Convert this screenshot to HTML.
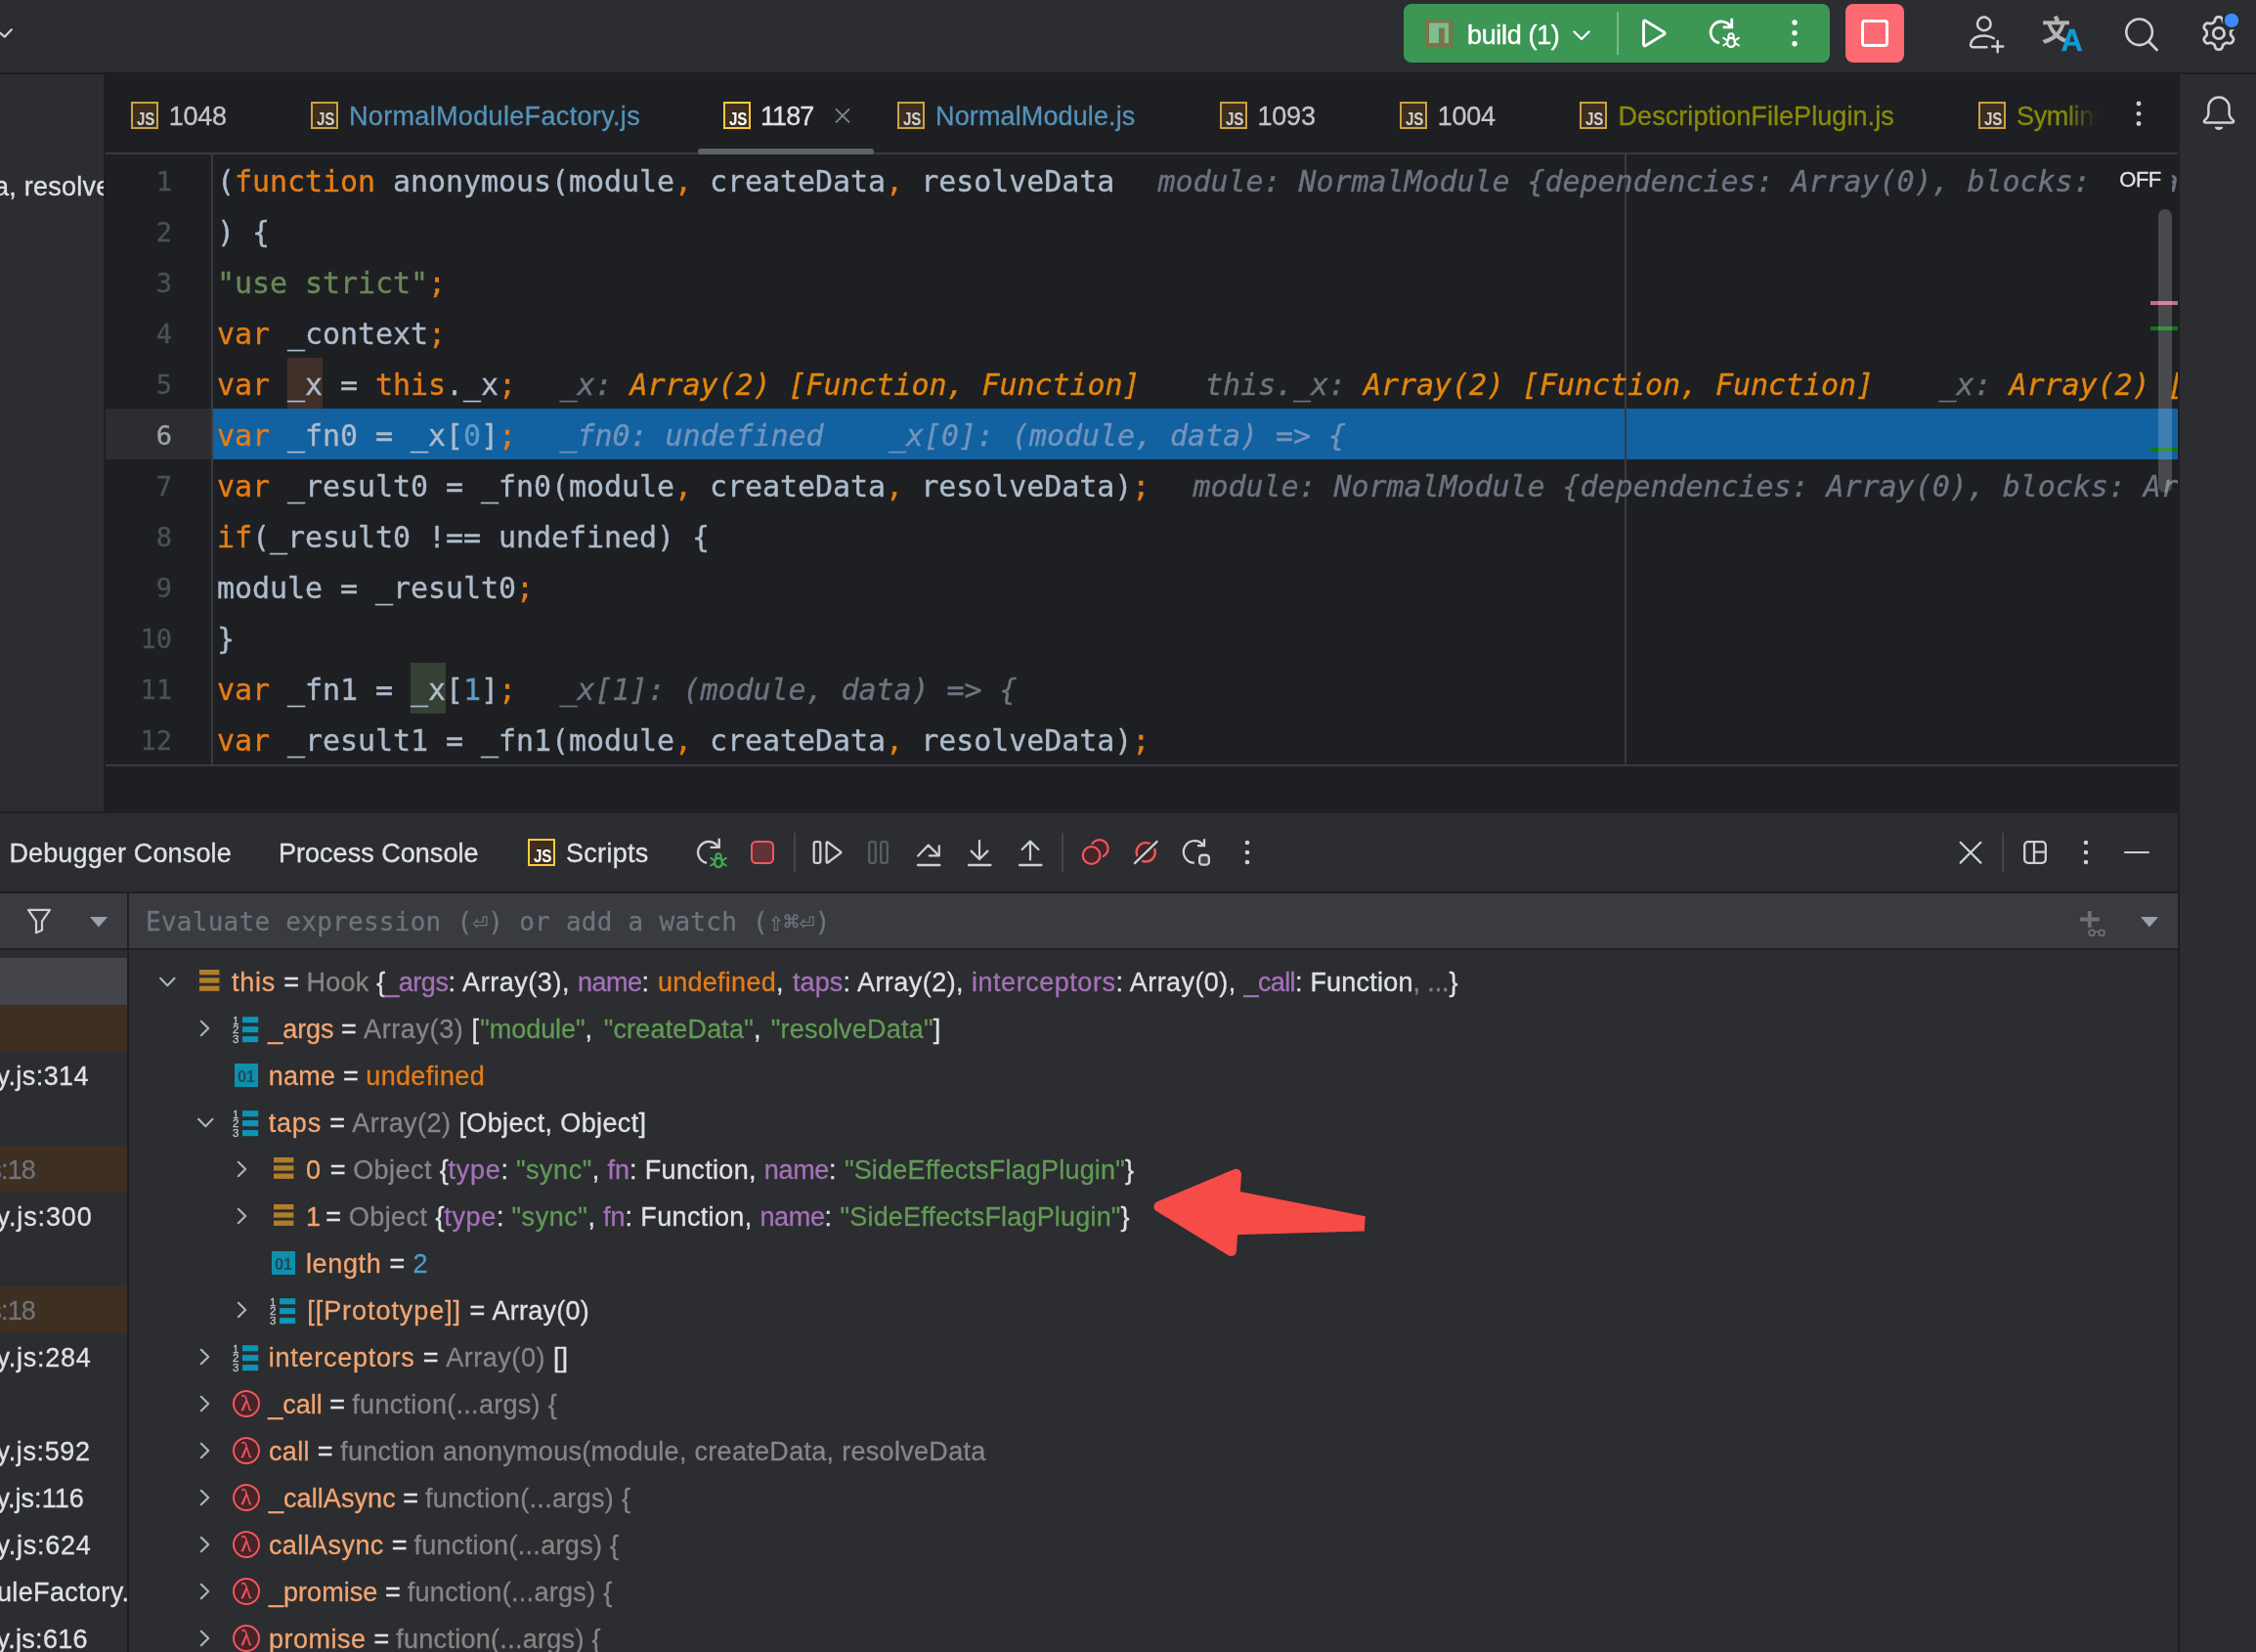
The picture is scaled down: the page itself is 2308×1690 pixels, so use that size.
<!DOCTYPE html>
<html lang="en"><head><meta charset="utf-8"><title>Debugger</title><style>
html,body{margin:0;padding:0;background:#2b2d30;}
body{width:2308px;height:1690px;overflow:hidden;position:relative;font-family:"Liberation Sans", "DejaVu Sans", sans-serif;}
#r{will-change:transform;position:absolute;left:0;top:0;width:2308px;height:1690px;overflow:hidden;}
#r>div,#r>span,#r>svg{position:absolute;}
#r>span{white-space:pre;display:block;-webkit-text-stroke:.3px;}
.js{width:28px;height:28px;box-sizing:border-box;border:2px solid #c9a344;background:#3d2e20;overflow:hidden;}
.js b{position:absolute;right:1.5px;bottom:1px;font:700 18.5px/14px "Liberation Sans", "DejaVu Sans", sans-serif;transform:scaleX(.82);transform-origin:100% 50%;letter-spacing:-.3px;}
.p01{width:24px;height:24px;background:#0e8fae;overflow:hidden;}
.p01 b{position:absolute;left:3px;top:4.5px;font:700 16.5px/16px "Liberation Sans", "DejaVu Sans", sans-serif;color:#1d4a57;letter-spacing:-.4px;}
.lam{width:28px;height:28px;box-sizing:border-box;border:2.2px solid #f2565c;border-radius:50%;background:#442427;}
.lam span{position:absolute;left:0;top:1.3px;width:23.6px;text-align:center;-webkit-text-stroke:.4px;font:23px/21px "Liberation Serif","DejaVu Serif",serif;color:#ee5361;}
.mono{font-family:"DejaVu Sans Mono", "Liberation Mono", monospace;}
.ln{left:108px;width:68px;text-align:right;font:27px/52px "DejaVu Sans Mono", "Liberation Mono", monospace;margin-top:2px;}
.cl{left:222px;width:2006px;height:52px;overflow:hidden;white-space:pre;font:30px/52px "DejaVu Sans Mono", "Liberation Mono", monospace;letter-spacing:-.06px;color:#adbbcb;}
.cl i{font-style:normal;display:inline-block;position:relative;top:2px;-webkit-text-stroke:.35px;}
.cl .k{color:#e57d15;} .cl .s{color:#6a8759;} .cl .n{color:#5d9dca;}
.cl .hg{color:#6c7480;font-style:oblique;} .cl .ho{color:#e2860c;font-style:oblique;} .cl .hb{color:#7294bd;font-style:oblique;}
</style></head>
<body><div id="r">
<div style="left:0px;top:0px;width:2308px;height:74px;background:#2b2d30;"></div>
<div style="left:0px;top:74px;width:2308px;height:2px;background:#1e1f22;"></div>
<div style="left:0px;top:76px;width:106px;height:754px;background:#2b2d30;"></div>
<div style="left:106px;top:76px;width:2124px;height:754px;background:#1e1f22;"></div>
<div style="left:2230px;top:76px;width:78px;height:1614px;background:#2b2d30;"></div>
<div style="left:0px;top:830px;width:2230px;height:2px;background:#1e1f22;"></div>
<div style="left:0px;top:832px;width:2228px;height:858px;background:#2b2d30;"></div>
<div style="left:2228px;top:830px;width:2px;height:860px;background:#1e1f22;"></div>
<div style="left:0px;top:912px;width:2228px;height:2px;background:#1e1f22;"></div>
<div style="left:0px;top:914px;width:2228px;height:56px;background:#393b40;"></div>
<div style="left:0px;top:970px;width:2228px;height:2px;background:#1e1f22;"></div>
<div style="left:130px;top:914px;width:2px;height:776px;background:#1e1f22;"></div>
<div style="left:108px;top:156px;width:2120px;height:2px;background:#393b40;"></div>
<div style="left:108px;top:782px;width:2120px;height:2px;background:#393b40;"></div>
<div style="left:216px;top:158px;width:2px;height:624px;background:#393b40;"></div>
<div style="left:714px;top:152px;width:180px;height:6px;background:#5f6269;border-radius:3px;"></div>
<div style="left:108px;top:418px;width:108px;height:52px;background:#2b2d30;"></div>
<div style="left:218px;top:418px;width:2010px;height:52px;background:#1261a0;"></div>
<div style="left:1662px;top:158px;width:2px;height:624px;background:#393b40;"></div>
<div style="left:294px;top:366px;width:36px;height:52px;background:#40302a;"></div>
<div style="left:420px;top:678px;width:36px;height:52px;background:#344134;"></div>
<div style="left:0px;top:980px;width:130px;height:48px;background:#43454a;"></div>
<div style="left:0px;top:1028px;width:130px;height:48px;background:#3d2f22;"></div>
<div style="left:0px;top:1172px;width:130px;height:48px;background:#3d2f22;"></div>
<div style="left:0px;top:1316px;width:130px;height:48px;background:#3d2f22;"></div>
<svg style="left:0px;top:24px;" width="16" height="20" viewBox="0 0 16 20" fill="none"><path d="M-4 6.2 L4.7 13.7 L11.8 6.3" stroke="#ced0d6" stroke-width="2.2" stroke-linecap="round" stroke-linejoin="round"/></svg>
<div style="left:1436px;top:4px;width:436px;height:60px;background:#3c9654;border-radius:8px;"></div>
<div style="left:1458px;top:20px;width:28px;height:28px;background:#7a7449;"></div>
<svg style="left:1458px;top:20px;" width="28" height="28" viewBox="0 0 28 28" fill="none"><path d="M4 3.6 H24 V24 H19.8 V8.6 H14 V24 H4 Z" fill="#7dbd8f"/></svg>
<span style="left:1501px;top:4px;line-height:60px;font-size:27px;color:#ffffff;letter-spacing:-0.339px;top:6px;-webkit-text-stroke:.45px #fff;">build (1)</span>
<svg style="left:1606px;top:26px;" width="24" height="20" viewBox="0 0 24 20" fill="none"><path d="M4.5 6.5 L12 14 L19.5 6.5" stroke="#fff" stroke-width="2.3" stroke-linecap="round" stroke-linejoin="round"/></svg>
<div style="left:1654px;top:12px;width:2px;height:44px;background:rgba(255,255,255,.32);"></div>
<svg style="left:1675.3px;top:14px;" width="36" height="40" viewBox="0 0 36 40" fill="none"><path d="M6.5 8.2 V31.8 a1.2 1.2 0 0 0 1.8 1 L27.6 21 a1.2 1.2 0 0 0 0-2 L8.3 7.2 a1.2 1.2 0 0 0 -1.8 1 Z" stroke="#fff" stroke-width="2.9" stroke-linejoin="round"/></svg>
<svg style="left:1748px;top:16.5px;" width="36" height="36" viewBox="0 0 36 36" fill="none"><path d="M11 26.8 A11 11 0 1 1 23 11.2" stroke="#ffffff" stroke-width="2.8"/><path d="M23.7 1.7 V10.9 H14.6" stroke="#ffffff" stroke-width="2.8"/><path d="M20.4 23 V19.8 a2.6 2.6 0 0 1 5.2 0 V23" stroke="#ffffff" stroke-width="2.1"/><ellipse cx="23" cy="26.4" rx="3.9" ry="4.6" stroke="#ffffff" stroke-width="2.4" fill="none"/><path d="M18.8 24.2 L15.2 21.9 M27.2 24.2 L30.8 21.9 M18.8 27.2 L15.2 29.5 M27.2 27.2 L30.8 29.5" stroke="#ffffff" stroke-width="2" stroke-linecap="round"/></svg>
<svg style="left:1830px;top:19.3px;" width="12" height="29.7" viewBox="0 0 12 29.7" fill="none"><circle cx="6" cy="4" r="2.7" fill="#ffffff"/><circle cx="6" cy="14.8" r="2.7" fill="#ffffff"/><circle cx="6" cy="25.7" r="2.7" fill="#ffffff"/></svg>
<div style="left:1888px;top:4px;width:60px;height:60px;background:#fe6a71;border-radius:8px;"></div>
<div style="left:1904px;top:20px;width:28px;height:28px;background:transparent;border:3px solid #fff;border-radius:4px;box-sizing:border-box;"></div>
<svg style="left:2010px;top:12px;" width="46" height="46" viewBox="0 0 46 46" fill="none"><circle cx="19.8" cy="12.4" r="6.8" stroke="#ced0d6" stroke-width="2.5"/><path d="M22.5 36.3 H8.6 a2.6 2.6 0 0 1 -2.5 -3.3 C7.6 27 13 24.6 19.8 24.6 c4 0 7.6 .9 10 2.6" stroke="#ced0d6" stroke-width="2.5" stroke-linecap="round"/><path d="M33.7 30 V41.2 M28.1 35.6 H39.3" stroke="#ced0d6" stroke-width="2.5" stroke-linecap="round"/></svg>
<span style="left:2089px;top:15px;font-size:29px;line-height:34px;color:#b4b4b4;font-family:'Liberation Sans','Noto Sans CJK SC',sans-serif;font-weight:700">文</span>
<span style="left:2108.5px;top:25px;font-size:31px;line-height:34px;color:#0e9ad6;font-weight:700">A</span>
<svg style="left:2170px;top:14px;" width="44" height="44" viewBox="0 0 44 44" fill="none"><circle cx="18.6" cy="18.8" r="13.3" stroke="#ced0d6" stroke-width="2.6"/><path d="M28.2 28.6 L36.6 37" stroke="#ced0d6" stroke-width="2.8" stroke-linecap="round"/></svg>
<svg style="left:2248px;top:12px;" width="46" height="46" viewBox="0 0 46 46" fill="none"><path d="M34.1 22 L34.1 22.6 L34.1 23.3 L34.3 24 L34.8 24.7 L35.8 25.7 L36.7 26.8 L37 27.8 L37 28.7 L36.7 29.5 L36.3 30.3 L35.8 31 L35.2 31.7 L34.5 32.2 L33.5 32.4 L32.1 32.2 L30.8 31.8 L29.8 31.8 L29.1 32 L28.6 32.3 L28 32.6 L27.4 32.9 L26.9 33.3 L26.4 33.7 L26 34.6 L25.6 35.9 L25.1 37.2 L24.4 38 L23.6 38.4 L22.8 38.6 L21.9 38.6 L21 38.6 L20.2 38.4 L19.4 38 L18.7 37.2 L18.2 35.9 L17.8 34.6 L17.4 33.7 L16.9 33.3 L16.4 32.9 L15.8 32.6 L15.2 32.3 L14.7 32 L14 31.8 L13 31.8 L11.7 32.2 L10.3 32.4 L9.3 32.2 L8.6 31.7 L8 31 L7.5 30.3 L7.1 29.5 L6.8 28.7 L6.8 27.8 L7.1 26.8 L8 25.7 L9 24.7 L9.5 24 L9.7 23.3 L9.7 22.6 L9.7 22 L9.7 21.4 L9.7 20.7 L9.5 20 L9 19.3 L8 18.3 L7.1 17.2 L6.8 16.2 L6.8 15.3 L7.1 14.5 L7.5 13.7 L8 13 L8.6 12.3 L9.3 11.8 L10.3 11.6 L11.7 11.8 L13 12.2 L14 12.2 L14.7 12 L15.2 11.7 L15.8 11.4 L16.4 11.1 L16.9 10.7 L17.4 10.3 L17.8 9.4 L18.2 8.1 L18.7 6.8 L19.4 6 L20.2 5.6 L21 5.4 L21.9 5.4 L22.8 5.4 L23.6 5.6 L24.4 6 L25.1 6.8 L25.6 8.1 L26 9.4 L26.4 10.3 L26.9 10.7 L27.4 11.1 L28 11.4 L28.6 11.7 L29.1 12 L29.8 12.2 L30.8 12.2 L32.1 11.8 L33.5 11.6 L34.5 11.8 L35.2 12.3 L35.8 13 L36.3 13.7 L36.7 14.5 L37 15.3 L37 16.2 L36.7 17.2 L35.8 18.3 L34.8 19.3 L34.3 20 L34.1 20.7 L34.1 21.4 Z" stroke="#ced0d6" stroke-width="2.8" stroke-linejoin="round"/><circle cx="21.9" cy="22" r="5.7" stroke="#ced0d6" stroke-width="2.8"/><circle cx="35" cy="8.9" r="9.4" fill="#2b2d30"/><circle cx="35" cy="8.9" r="7.2" fill="#3d8bff"/></svg>
<div style="left:0;top:158px;width:106px;height:52px;overflow:hidden"><span style="position:absolute;left:-6px;top:7px;line-height:52px;font-size:27px;color:#dfe1e5;letter-spacing:.25px;-webkit-text-stroke:.3px;white-space:pre">a, resolveData</span></div>
<div class="js" style="left:134px;top:104px;border-color:#c9a344;color:#cfcfcf"><b>JS</b></div>
<span style="left:172.7px;top:95px;line-height:48px;font-size:27px;color:#c3c5ca;letter-spacing:-0.22px;">1048</span>
<div class="js" style="left:318px;top:104px;border-color:#c9a344;color:#cfcfcf"><b>JS</b></div>
<span style="left:357px;top:95px;line-height:48px;font-size:27px;color:#5592ba;letter-spacing:0.337px;">NormalModuleFactory.js</span>
<div class="js" style="left:740px;top:104px;border-color:#ffcb3d;color:#ffffff"><b>JS</b></div>
<span style="left:778px;top:95px;line-height:48px;font-size:27px;color:#dfe1e5;letter-spacing:-0.891px;">1187</span>
<div class="js" style="left:918px;top:104px;border-color:#c9a344;color:#cfcfcf"><b>JS</b></div>
<span style="left:957px;top:95px;line-height:48px;font-size:27px;color:#5592ba;letter-spacing:0.128px;">NormalModule.js</span>
<div class="js" style="left:1248px;top:104px;border-color:#c9a344;color:#cfcfcf"><b>JS</b></div>
<span style="left:1286.4px;top:95px;line-height:48px;font-size:27px;color:#c3c5ca;letter-spacing:-0.17px;">1093</span>
<div class="js" style="left:1432px;top:104px;border-color:#c9a344;color:#cfcfcf"><b>JS</b></div>
<span style="left:1470.8px;top:95px;line-height:48px;font-size:27px;color:#c3c5ca;letter-spacing:-0.27px;">1004</span>
<div class="js" style="left:1616px;top:104px;border-color:#c9a344;color:#cfcfcf"><b>JS</b></div>
<span style="left:1655.5px;top:95px;line-height:48px;font-size:27px;color:#8a8b09;letter-spacing:0.07px;">DescriptionFilePlugin.js</span>
<div class="js" style="left:2024px;top:104px;border-color:#c9a344;color:#cfcfcf"><b>JS</b></div>
<span style="left:2063px;top:95px;line-height:48px;font-size:27px;color:#8a8b09;letter-spacing:-0.359px;">Symlink</span>
<div style="left:2112px;top:96px;width:40px;height:48px;background:linear-gradient(90deg, rgba(30,31,34,0), #1e1f22 85%);"></div>
<div style="left:2150px;top:96px;width:30px;height:48px;background:#1e1f22;"></div>
<svg style="left:852px;top:108px;" width="20" height="20" viewBox="0 0 20 20" fill="none"><path d="M3 3.4 L17 17.4 M17 3.4 L3 17.4" stroke="#7f838b" stroke-width="2"/></svg>
<svg style="left:2182px;top:101.6px;" width="12" height="28.5" viewBox="0 0 12 28.5" fill="none"><circle cx="6" cy="4" r="2.4" fill="#ced0d6"/><circle cx="6" cy="14.300000000000011" r="2.4" fill="#ced0d6"/><circle cx="6" cy="24.5" r="2.4" fill="#ced0d6"/></svg>
<svg style="left:2250px;top:96px;" width="40" height="40" viewBox="0 0 40 40" fill="none"><path d="M20 3.6 c-6 0-10.6 4.4-10.6 10.6 v6.4 c0 1.6-.6 3-1.8 4.2 l-2.4 2.6 c-.8 .9-.2 2.2 1 2.2 h27.6 c1.2 0 1.8-1.3 1-2.2 l-2.4-2.6 c-1.2-1.2-1.8-2.6-1.8-4.2 v-6.4 C30.6 8 26 3.6 20 3.6 Z" stroke="#ced0d6" stroke-width="2.5" stroke-linejoin="round"/><path d="M15.6 33.8 a4.6 4.6 0 0 0 8.8 0 Z" fill="#ced0d6"/></svg>
<span class="ln" style="top:158px;color:#4b5059">1</span>
<div class="cl" style="top:158px"><i class="d">(</i><i class="k">function</i><i class="d"> anonymous(module</i><i class="k">,</i><i class="d"> createData</i><i class="k">,</i><i class="d"> resolveData</i><i style="margin-left:44.4px"></i><i class="hg">module: NormalModule {dependencies: Array(0), blocks: Array(0), type: "javascript/auto"</i></div>
<span class="ln" style="top:210px;color:#4b5059">2</span>
<div class="cl" style="top:210px"><i class="d">) {</i></div>
<span class="ln" style="top:262px;color:#4b5059">3</span>
<div class="cl" style="top:262px"><i class="s">"use strict"</i><i class="k">;</i></div>
<span class="ln" style="top:314px;color:#4b5059">4</span>
<div class="cl" style="top:314px"><i class="k">var</i><i class="d"> _context</i><i class="k">;</i></div>
<span class="ln" style="top:366px;color:#4b5059">5</span>
<div class="cl" style="top:366px"><i class="k">var</i><i class="d"> _x = </i><i class="k">this</i><i class="d">._x</i><i class="k">;</i><i style="margin-left:44.4px"></i><i class="hg">_x: </i><i class="ho">Array(2) [Function, Function]</i><i style="margin-left:66.5px"></i><i class="hg">this._x: </i><i class="ho">Array(2) [Function, Function]</i><i style="margin-left:66.5px"></i><i class="hg">_x: </i><i class="ho">Array(2) [Function, Function]</i></div>
<span class="ln" style="top:418px;color:#a1a3ab">6</span>
<div class="cl" style="top:418px"><i class="k">var</i><i class="d"> _fn0 = _x[</i><i class="n">0</i><i class="d">]</i><i class="k">;</i><i style="margin-left:44.4px"></i><i class="hb">_fn0: undefined</i><i style="margin-left:66.5px"></i><i class="hb">_x[0]: (module, data) =&gt; {</i></div>
<span class="ln" style="top:470px;color:#4b5059">7</span>
<div class="cl" style="top:470px"><i class="k">var</i><i class="d"> _result0 = _fn0(module</i><i class="k">,</i><i class="d"> createData</i><i class="k">,</i><i class="d"> resolveData)</i><i class="k">;</i><i style="margin-left:44.4px"></i><i class="hg">module: NormalModule {dependencies: Array(0), blocks: Array(0), type: "javascript/auto"</i></div>
<span class="ln" style="top:522px;color:#4b5059">8</span>
<div class="cl" style="top:522px"><i class="k">if</i><i class="d">(_result0 !== undefined) {</i></div>
<span class="ln" style="top:574px;color:#4b5059">9</span>
<div class="cl" style="top:574px"><i class="d">module = _result0</i><i class="k">;</i></div>
<span class="ln" style="top:626px;color:#4b5059">10</span>
<div class="cl" style="top:626px"><i class="d">}</i></div>
<span class="ln" style="top:678px;color:#4b5059">11</span>
<div class="cl" style="top:678px"><i class="k">var</i><i class="d"> _fn1 = _x[</i><i class="n">1</i><i class="d">]</i><i class="k">;</i><i style="margin-left:44.4px"></i><i class="hg">_x[1]: (module, data) =&gt; {</i></div>
<span class="ln" style="top:730px;color:#4b5059">12</span>
<div class="cl" style="top:730px"><i class="k">var</i><i class="d"> _result1 = _fn1(module</i><i class="k">,</i><i class="d"> createData</i><i class="k">,</i><i class="d"> resolveData)</i><i class="k">;</i></div>
<div style="left:2150px;top:160px;width:72px;height:48px;background:#1e1f22;"></div>
<span style="left:2168.3px;top:160px;line-height:48px;font-size:22px;color:#dfe1e5;letter-spacing:-0.5px;">OFF</span>
<div style="left:2200px;top:308px;width:28px;height:4px;background:#c86a8a;"></div>
<div style="left:2200px;top:334px;width:28px;height:4px;background:#0a7a14;"></div>
<div style="left:2200px;top:458px;width:28px;height:4px;background:#0a7a14;"></div>
<div style="left:2208px;top:214px;width:14px;height:290px;background:rgba(255,255,255,.19);border-radius:7px;"></div>
<span style="left:9.4px;top:832px;line-height:80px;font-size:27px;color:#dfe1e5;letter-spacing:0.146px;top:833px;">Debugger Console</span>
<span style="left:285px;top:832px;line-height:80px;font-size:27px;color:#dfe1e5;letter-spacing:0.026px;top:833px;">Process Console</span>
<div class="js" style="left:540px;top:858px;border-color:#ffcb3d;color:#ffffff"><b>JS</b></div>
<span style="left:579px;top:832px;line-height:80px;font-size:27px;color:#dfe1e5;letter-spacing:0.296px;top:833px;">Scripts</span>
<svg style="left:712px;top:856px;" width="36" height="36" viewBox="0 0 36 36" fill="none"><path d="M11 26.8 A11 11 0 1 1 23 11.2" stroke="#ced0d6" stroke-width="2.4"/><path d="M23.7 1.7 V10.9 H14.6" stroke="#ced0d6" stroke-width="2.4"/><path d="M20.4 23 V19.8 a2.6 2.6 0 0 1 5.2 0 V23" stroke="#45a85a" stroke-width="2.1"/><ellipse cx="23" cy="26.4" rx="3.9" ry="4.6" stroke="#45a85a" stroke-width="2.4" fill="#1c3d25"/><path d="M18.8 24.2 L15.2 21.9 M27.2 24.2 L30.8 21.9 M18.8 27.2 L15.2 29.5 M27.2 27.2 L30.8 29.5" stroke="#45a85a" stroke-width="2" stroke-linecap="round"/></svg>
<div style="left:768px;top:860px;width:24px;height:24px;background:#5f3337;border:2.3px solid #f2595f;border-radius:5.5px;box-sizing:border-box;"></div>
<div style="left:812px;top:852px;width:2px;height:40px;background:#43454a;"></div>
<svg style="left:828px;top:856px;" width="36" height="32" viewBox="0 0 36 32" fill="none"><rect x="4.7" y="5.2" width="6.6" height="21.6" rx="2" stroke="#ced0d6" stroke-width="2.3"/><path d="M17.6 6.2 V25.8 a.8 .8 0 0 0 1.2 .7 L32 16.7 a.8 .8 0 0 0 0-1.4 L18.8 5.5 a.8 .8 0 0 0 -1.2 .7 Z" stroke="#ced0d6" stroke-width="2.3" stroke-linejoin="round"/></svg>
<svg style="left:884px;top:856px;" width="28" height="32" viewBox="0 0 28 32" fill="none"><rect x="5.2" y="5.2" width="6.6" height="21.6" rx="2" stroke="#5a5d63" stroke-width="2.3"/><rect x="17.2" y="5.2" width="6.6" height="21.6" rx="2" stroke="#5a5d63" stroke-width="2.3"/></svg>
<svg style="left:934px;top:856px;" width="32" height="32" viewBox="0 0 32 32" fill="none"><path d="M5.2 19.6 L15.8 8.6 L26.6 19.2 M16.8 19.4 H26.8 V9.4" stroke="#ced0d6" stroke-width="2.2" stroke-linecap="round" stroke-linejoin="round"/><path d="M5 29 H27.4" stroke="#ced0d6" stroke-width="2.3" stroke-linecap="round"/></svg>
<svg style="left:986px;top:856px;" width="32" height="32" viewBox="0 0 32 32" fill="none"><path d="M16 4 V22.6 M7.6 14.6 L16 23 L24.4 14.6" stroke="#ced0d6" stroke-width="2.2" stroke-linecap="round" stroke-linejoin="round"/><path d="M5 29 H27.4" stroke="#ced0d6" stroke-width="2.3" stroke-linecap="round"/></svg>
<svg style="left:1038px;top:856px;" width="32" height="32" viewBox="0 0 32 32" fill="none"><path d="M16 23.4 V5 M7.6 13 L16 4.6 L24.4 13" stroke="#ced0d6" stroke-width="2.2" stroke-linecap="round" stroke-linejoin="round"/><path d="M5 29 H27.4" stroke="#ced0d6" stroke-width="2.3" stroke-linecap="round"/></svg>
<div style="left:1086px;top:852px;width:2px;height:40px;background:#43454a;"></div>
<svg style="left:1102px;top:854px;" width="36" height="36" viewBox="0 0 36 36" fill="none"><circle cx="22.8" cy="14" r="8.8" fill="#462427" stroke="#f2565c" stroke-width="2.3"/><circle cx="14.6" cy="21" r="11.2" fill="#2b2d30"/><circle cx="14.6" cy="21" r="8.8" fill="#462427" stroke="#f2565c" stroke-width="2.3"/></svg>
<svg style="left:1154px;top:854px;" width="36" height="36" viewBox="0 0 36 36" fill="none"><circle cx="18.2" cy="17.8" r="9.6" fill="#462427" stroke="#f2565c" stroke-width="2.3"/><path d="M6.9 29.1 L29.7 6.9" stroke="#2b2d30" stroke-width="6.5"/><path d="M6.9 29.1 L29.7 6.9" stroke="#ced0d6" stroke-width="2.2" stroke-linecap="round"/></svg>
<svg style="left:1206px;top:854px;" width="36" height="36" viewBox="0 0 36 36" fill="none"><path d="M15.76 28.74 A11.3 11.3 0 1 1 25.69 11.4" stroke="#ced0d6" stroke-width="2.3"/><path d="M26 4.3 V11.2 H19" stroke="#ced0d6" stroke-width="2.3"/><rect x="21.15" y="20.75" width="9.7" height="9.9" rx="3" fill="#43454a" stroke="#ced0d6" stroke-width="2.3"/></svg>
<svg style="left:1270px;top:858.2px;" width="12" height="28" viewBox="0 0 12 28" fill="none"><circle cx="6" cy="4" r="2.3" fill="#ced0d6"/><circle cx="6" cy="14" r="2.3" fill="#ced0d6"/><circle cx="6" cy="24" r="2.3" fill="#ced0d6"/></svg>
<svg style="left:2000px;top:856px;" width="32" height="32" viewBox="0 0 32 32" fill="none"><path d="M5.6 5.8 L26.4 26.6 M26.4 5.8 L5.6 26.6" stroke="#ced0d6" stroke-width="2.2" stroke-linecap="round"/></svg>
<div style="left:2048px;top:852px;width:2px;height:40px;background:#43454a;"></div>
<svg style="left:2066px;top:856px;" width="32" height="32" viewBox="0 0 32 32" fill="none"><rect x="5.2" y="5.2" width="21.6" height="21.6" rx="3.6" stroke="#ced0d6" stroke-width="2.3"/><path d="M15 5.2 V26.8 M15 15.6 H26.8" stroke="#ced0d6" stroke-width="2.3"/></svg>
<svg style="left:2128px;top:858.1px;" width="12" height="28" viewBox="0 0 12 28" fill="none"><circle cx="6" cy="4" r="2.3" fill="#ced0d6"/><circle cx="6" cy="14" r="2.3" fill="#ced0d6"/><circle cx="6" cy="24" r="2.3" fill="#ced0d6"/></svg>
<div style="left:2173px;top:870.9px;width:26px;height:2.3px;background:#ced0d6;border-radius:1px;"></div>
<svg style="left:24px;top:926px;" width="32" height="32" viewBox="0 0 32 32" fill="none"><path d="M5 4.8 H27 L19 16.4 V25.4 L13 28.2 V16.4 Z" stroke="#ced0d6" stroke-width="2.2" stroke-linejoin="round"/></svg>
<svg style="left:90px;top:936px;" width="22" height="14" viewBox="0 0 22 14" fill="none"><path d="M2 2 H20 L11 12.4 Z" fill="#9da0a8"/></svg>
<span style="left:149px;top:915px;line-height:56px;font-size:26px;color:#6f737a;letter-spacing:.27px;white-space:pre" class="mono">Evaluate expression (⏎) or add a watch (⇧⌘⏎)</span>
<svg style="left:2124px;top:928px;" width="34" height="34" viewBox="0 0 34 34" fill="none"><path d="M13.8 4 V20.8 M4 12.4 H23.9" stroke="#6e7075" stroke-width="4"/><circle cx="16" cy="26.2" r="2.9" stroke="#6e7075" stroke-width="1.7"/><circle cx="26" cy="26.2" r="2.9" stroke="#6e7075" stroke-width="1.7"/><path d="M18.8 25.6 q2.2 -1.4 4.4 0" stroke="#6e7075" stroke-width="1.5"/></svg>
<svg style="left:2188px;top:936px;" width="22" height="14" viewBox="0 0 22 14" fill="none"><path d="M2 2 H20 L11 12.4 Z" fill="#9da0a8"/></svg>
<span style="left:-3.5px;top:1076px;line-height:48px;font-size:27px;color:#dfe1e5;letter-spacing:0.432px;top:1077px;">y.js:314</span>
<span style="left:-11.5px;top:1172px;line-height:48px;font-size:27px;color:#6f737a;letter-spacing:-0.937px;top:1173px;">s:18</span>
<span style="left:-3.5px;top:1220px;line-height:48px;font-size:27px;color:#dfe1e5;letter-spacing:0.882px;top:1221px;">y.js:300</span>
<span style="left:-11.5px;top:1316px;line-height:48px;font-size:27px;color:#6f737a;letter-spacing:-0.937px;top:1317px;">s:18</span>
<span style="left:-3.5px;top:1364px;line-height:48px;font-size:27px;color:#dfe1e5;letter-spacing:0.744px;top:1365px;">y.js:284</span>
<span style="left:-3.5px;top:1460px;line-height:48px;font-size:27px;color:#dfe1e5;letter-spacing:0.632px;top:1461px;">y.js:592</span>
<span style="left:-3.5px;top:1508px;line-height:48px;font-size:27px;color:#dfe1e5;letter-spacing:0.032px;top:1509px;">y.js:116</span>
<span style="left:-3.5px;top:1556px;line-height:48px;font-size:27px;color:#dfe1e5;letter-spacing:0.744px;top:1557px;">y.js:624</span>
<div style="left:0;top:1604px;width:130px;height:48px;overflow:hidden"><span style="position:absolute;left:-3px;top:1px;line-height:48px;font-size:27px;color:#dfe1e5;letter-spacing:.35px;-webkit-text-stroke:.3px;white-space:pre">uleFactory.js</span></div>
<span style="left:-3.5px;top:1652px;line-height:48px;font-size:27px;color:#dfe1e5;letter-spacing:0.282px;top:1653px;">y.js:616</span>
<svg style="left:160.6px;top:996.5px;" width="22" height="16" viewBox="0 0 22 16" fill="none"><path d="M3.1 3.8 L10.3 11.2 L17.5 3.8" stroke="#b0b3bd" stroke-width="2.1" stroke-linecap="round" stroke-linejoin="round"/></svg>
<svg style="left:204px;top:992px;" width="21" height="22" viewBox="0 0 21 22" fill="none"><rect x="0" y="0" width="20.4" height="5.3" fill="#b07d2b"/><rect x="0" y="8.3" width="20.4" height="5.3" fill="#b07d2b"/><rect x="0" y="16.6" width="20.4" height="5.3" fill="#b07d2b"/></svg>
<span style="left:237px;top:981px;line-height:48px;font-size:27px;color:#f3a571;letter-spacing:0.734px;">this </span>
<span style="left:290.2px;top:981px;line-height:48px;font-size:27px;color:#dfe1e5;letter-spacing:0.059px;">= </span>
<span style="left:313.6px;top:981px;line-height:48px;font-size:27px;color:#868686;letter-spacing:0.231px;">Hook </span>
<span style="left:385.3px;top:981px;line-height:48px;font-size:27px;color:#dfe1e5;letter-spacing:-1.131px;">{</span>
<span style="left:393.2px;top:981px;line-height:48px;font-size:27px;color:#a571ba;letter-spacing:-0.449px;">_args</span>
<span style="left:458.5px;top:981px;line-height:48px;font-size:27px;color:#dfe1e5;letter-spacing:0.539px;">: Array(3), </span>
<span style="left:591px;top:981px;line-height:48px;font-size:27px;color:#a571ba;letter-spacing:-0.512px;">name</span>
<span style="left:656.5px;top:981px;line-height:48px;font-size:27px;color:#dfe1e5;letter-spacing:0.692px;">: </span>
<span style="left:672.9px;top:981px;line-height:48px;font-size:27px;color:#e47c1a;letter-spacing:0.275px;">undefined</span>
<span style="left:794px;top:981px;line-height:48px;font-size:27px;color:#dfe1e5;letter-spacing:0.992px;">, </span>
<span style="left:811px;top:981px;line-height:48px;font-size:27px;color:#a571ba;letter-spacing:0.113px;">taps</span>
<span style="left:862.5px;top:981px;line-height:48px;font-size:27px;color:#dfe1e5;letter-spacing:0.456px;">: Array(2), </span>
<span style="left:994px;top:981px;line-height:48px;font-size:27px;color:#a571ba;letter-spacing:0.535px;">interceptors</span>
<span style="left:1141.5px;top:981px;line-height:48px;font-size:27px;color:#dfe1e5;letter-spacing:0.414px;">: Array(0), </span>
<span style="left:1272.5px;top:981px;line-height:48px;font-size:27px;color:#a571ba;letter-spacing:-0.606px;">_call</span>
<span style="left:1325px;top:981px;line-height:48px;font-size:27px;color:#dfe1e5;letter-spacing:0.204px;">: Function</span>
<span style="left:1445.6px;top:981px;line-height:48px;font-size:27px;color:#868686;letter-spacing:-0.123px;">, ...</span>
<span style="left:1482.5px;top:981px;line-height:48px;font-size:27px;color:#dfe1e5;letter-spacing:0.969px;">}</span>
<svg style="left:202px;top:1041px;" width="16" height="22" viewBox="0 0 16 22" fill="none"><path d="M3.8 3.8 L11.2 11 L3.8 18.2" stroke="#b0b3bd" stroke-width="2.1" stroke-linecap="round" stroke-linejoin="round"/></svg>
<svg style="left:238px;top:1037.5px;" width="27" height="31" viewBox="0 0 27 31" fill="none"><text x="0" y="9.6" font-size="11.5" font-family="Liberation Sans, sans-serif" fill="#bcc3cb" stroke="#bcc3cb" stroke-width=".3">1</text><text x="0" y="19.3" font-size="11.5" font-family="Liberation Sans, sans-serif" fill="#bcc3cb" stroke="#bcc3cb" stroke-width=".3">2</text><text x="0" y="29" font-size="11.5" font-family="Liberation Sans, sans-serif" fill="#bcc3cb" stroke="#bcc3cb" stroke-width=".3">3</text><rect x="10" y="2.2" width="16.2" height="6.1" fill="#0d95b6"/><rect x="10" y="12.1" width="16.2" height="6.1" fill="#0d95b6"/><rect x="10" y="22.1" width="16.2" height="6.1" fill="#0d95b6"/></svg>
<span style="left:274.3px;top:1029px;line-height:48px;font-size:27px;color:#f3a571;letter-spacing:-0.074px;">_args </span>
<span style="left:348.9px;top:1029px;line-height:48px;font-size:27px;color:#dfe1e5;letter-spacing:-0.091px;">= </span>
<span style="left:372px;top:1029px;line-height:48px;font-size:27px;color:#868686;letter-spacing:0.62px;">Array(3) </span>
<span style="left:482.6px;top:1029px;line-height:48px;font-size:27px;color:#dfe1e5;letter-spacing:1.184px;">[</span>
<span style="left:491.3px;top:1029px;line-height:48px;font-size:27px;color:#629a55;letter-spacing:-0.067px;">"module"</span>
<span style="left:598.5px;top:1029px;line-height:48px;font-size:27px;color:#dfe1e5;letter-spacing:2.092px;">, </span>
<span style="left:617.7px;top:1029px;line-height:48px;font-size:27px;color:#629a55;letter-spacing:0.171px;">"createData"</span>
<span style="left:771px;top:1029px;line-height:48px;font-size:27px;color:#dfe1e5;letter-spacing:1.342px;">, </span>
<span style="left:788.7px;top:1029px;line-height:48px;font-size:27px;color:#629a55;letter-spacing:0.219px;">"resolveData"</span>
<span style="left:954.8px;top:1029px;line-height:48px;font-size:27px;color:#dfe1e5;letter-spacing:0.684px;">]</span>
<div class="p01" style="left:240px;top:1088px"><b>01</b></div>
<span style="left:274.8px;top:1077px;line-height:48px;font-size:27px;color:#f3a571;letter-spacing:0.211px;">name </span>
<span style="left:350.9px;top:1077px;line-height:48px;font-size:27px;color:#dfe1e5;letter-spacing:0.059px;">= </span>
<span style="left:374.3px;top:1077px;line-height:48px;font-size:27px;color:#e47c1a;letter-spacing:0.342px;">undefined</span>
<svg style="left:199.6px;top:1140.5px;" width="22" height="16" viewBox="0 0 22 16" fill="none"><path d="M3.1 3.8 L10.3 11.2 L17.5 3.8" stroke="#b0b3bd" stroke-width="2.1" stroke-linecap="round" stroke-linejoin="round"/></svg>
<svg style="left:238px;top:1133.5px;" width="27" height="31" viewBox="0 0 27 31" fill="none"><text x="0" y="9.6" font-size="11.5" font-family="Liberation Sans, sans-serif" fill="#bcc3cb" stroke="#bcc3cb" stroke-width=".3">1</text><text x="0" y="19.3" font-size="11.5" font-family="Liberation Sans, sans-serif" fill="#bcc3cb" stroke="#bcc3cb" stroke-width=".3">2</text><text x="0" y="29" font-size="11.5" font-family="Liberation Sans, sans-serif" fill="#bcc3cb" stroke="#bcc3cb" stroke-width=".3">3</text><rect x="10" y="2.2" width="16.2" height="6.1" fill="#0d95b6"/><rect x="10" y="12.1" width="16.2" height="6.1" fill="#0d95b6"/><rect x="10" y="22.1" width="16.2" height="6.1" fill="#0d95b6"/></svg>
<span style="left:274.8px;top:1125px;line-height:48px;font-size:27px;color:#f3a571;letter-spacing:0.771px;">taps </span>
<span style="left:337.2px;top:1125px;line-height:48px;font-size:27px;color:#dfe1e5;letter-spacing:-0.091px;">= </span>
<span style="left:360.3px;top:1125px;line-height:48px;font-size:27px;color:#868686;letter-spacing:0.454px;">Array(2) </span>
<span style="left:469.4px;top:1125px;line-height:48px;font-size:27px;color:#dfe1e5;letter-spacing:0.376px;">[Object, Object]</span>
<svg style="left:239.7px;top:1185px;" width="16" height="22" viewBox="0 0 16 22" fill="none"><path d="M3.8 3.8 L11.2 11 L3.8 18.2" stroke="#b0b3bd" stroke-width="2.1" stroke-linecap="round" stroke-linejoin="round"/></svg>
<svg style="left:279.8px;top:1184px;" width="21" height="22" viewBox="0 0 21 22" fill="none"><rect x="0" y="0" width="20.4" height="5.3" fill="#b07d2b"/><rect x="0" y="8.3" width="20.4" height="5.3" fill="#b07d2b"/><rect x="0" y="16.6" width="20.4" height="5.3" fill="#b07d2b"/></svg>
<span style="left:312.9px;top:1173px;line-height:48px;font-size:27px;color:#f3a571;letter-spacing:1.134px;">0 </span>
<span style="left:337.7px;top:1173px;line-height:48px;font-size:27px;color:#dfe1e5;letter-spacing:0.109px;">= </span>
<span style="left:361.2px;top:1173px;line-height:48px;font-size:27px;color:#868686;letter-spacing:0.436px;">Object </span>
<span style="left:449.8px;top:1173px;line-height:48px;font-size:27px;color:#dfe1e5;letter-spacing:-0.231px;">{</span>
<span style="left:458.6px;top:1173px;line-height:48px;font-size:27px;color:#a571ba;letter-spacing:0.688px;">type</span>
<span style="left:512.4px;top:1173px;line-height:48px;font-size:27px;color:#dfe1e5;letter-spacing:0.242px;">: </span>
<span style="left:527.9px;top:1173px;line-height:48px;font-size:27px;color:#629a55;letter-spacing:0.535px;">"sync"</span>
<span style="left:605.8px;top:1173px;line-height:48px;font-size:27px;color:#dfe1e5;letter-spacing:0.342px;">, </span>
<span style="left:621.5px;top:1173px;line-height:48px;font-size:27px;color:#a571ba;letter-spacing:-0.016px;">fn</span>
<span style="left:644px;top:1173px;line-height:48px;font-size:27px;color:#dfe1e5;letter-spacing:0.352px;">: Function, </span>
<span style="left:781.8px;top:1173px;line-height:48px;font-size:27px;color:#a571ba;letter-spacing:-0.337px;">name</span>
<span style="left:848px;top:1173px;line-height:48px;font-size:27px;color:#dfe1e5;letter-spacing:0.442px;">: </span>
<span style="left:863.9px;top:1173px;line-height:48px;font-size:27px;color:#629a55;letter-spacing:0.186px;">"SideEffectsFlagPlugin"</span>
<span style="left:1151px;top:1173px;line-height:48px;font-size:27px;color:#dfe1e5;letter-spacing:0.469px;">}</span>
<svg style="left:239.7px;top:1233px;" width="16" height="22" viewBox="0 0 16 22" fill="none"><path d="M3.8 3.8 L11.2 11 L3.8 18.2" stroke="#b0b3bd" stroke-width="2.1" stroke-linecap="round" stroke-linejoin="round"/></svg>
<svg style="left:279.8px;top:1232px;" width="21" height="22" viewBox="0 0 21 22" fill="none"><rect x="0" y="0" width="20.4" height="5.3" fill="#b07d2b"/><rect x="0" y="8.3" width="20.4" height="5.3" fill="#b07d2b"/><rect x="0" y="16.6" width="20.4" height="5.3" fill="#b07d2b"/></svg>
<span style="left:312.9px;top:1221px;line-height:48px;font-size:27px;color:#f3a571;letter-spacing:-1.066px;">1 </span>
<span style="left:333.3px;top:1221px;line-height:48px;font-size:27px;color:#dfe1e5;letter-spacing:0.109px;">= </span>
<span style="left:356.8px;top:1221px;line-height:48px;font-size:27px;color:#868686;letter-spacing:0.436px;">Object </span>
<span style="left:445.40000000000003px;top:1221px;line-height:48px;font-size:27px;color:#dfe1e5;letter-spacing:-0.231px;">{</span>
<span style="left:454.20000000000005px;top:1221px;line-height:48px;font-size:27px;color:#a571ba;letter-spacing:0.688px;">type</span>
<span style="left:508px;top:1221px;line-height:48px;font-size:27px;color:#dfe1e5;letter-spacing:0.242px;">: </span>
<span style="left:523.5px;top:1221px;line-height:48px;font-size:27px;color:#629a55;letter-spacing:0.535px;">"sync"</span>
<span style="left:601.4px;top:1221px;line-height:48px;font-size:27px;color:#dfe1e5;letter-spacing:0.342px;">, </span>
<span style="left:617.1px;top:1221px;line-height:48px;font-size:27px;color:#a571ba;letter-spacing:-0.016px;">fn</span>
<span style="left:639.6px;top:1221px;line-height:48px;font-size:27px;color:#dfe1e5;letter-spacing:0.352px;">: Function, </span>
<span style="left:777.4px;top:1221px;line-height:48px;font-size:27px;color:#a571ba;letter-spacing:-0.337px;">name</span>
<span style="left:843.6px;top:1221px;line-height:48px;font-size:27px;color:#dfe1e5;letter-spacing:0.442px;">: </span>
<span style="left:859.5px;top:1221px;line-height:48px;font-size:27px;color:#629a55;letter-spacing:0.186px;">"SideEffectsFlagPlugin"</span>
<span style="left:1146.6px;top:1221px;line-height:48px;font-size:27px;color:#dfe1e5;letter-spacing:0.469px;">}</span>
<div class="p01" style="left:278px;top:1280px"><b>01</b></div>
<span style="left:312.9px;top:1269px;line-height:48px;font-size:27px;color:#f3a571;letter-spacing:0.66px;">length </span>
<span style="left:398.6px;top:1269px;line-height:48px;font-size:27px;color:#dfe1e5;letter-spacing:0.359px;">= </span>
<span style="left:422.6px;top:1269px;line-height:48px;font-size:27px;color:#4e9bcf;letter-spacing:-1.631px;">2</span>
<svg style="left:239.7px;top:1329px;" width="16" height="22" viewBox="0 0 16 22" fill="none"><path d="M3.8 3.8 L11.2 11 L3.8 18.2" stroke="#b0b3bd" stroke-width="2.1" stroke-linecap="round" stroke-linejoin="round"/></svg>
<svg style="left:276.3px;top:1325.5px;" width="27" height="31" viewBox="0 0 27 31" fill="none"><text x="0" y="9.6" font-size="11.5" font-family="Liberation Sans, sans-serif" fill="#bcc3cb" stroke="#bcc3cb" stroke-width=".3">1</text><text x="0" y="19.3" font-size="11.5" font-family="Liberation Sans, sans-serif" fill="#bcc3cb" stroke="#bcc3cb" stroke-width=".3">2</text><text x="0" y="29" font-size="11.5" font-family="Liberation Sans, sans-serif" fill="#bcc3cb" stroke="#bcc3cb" stroke-width=".3">3</text><rect x="10" y="2.2" width="16.2" height="6.1" fill="#0d95b6"/><rect x="10" y="12.1" width="16.2" height="6.1" fill="#0d95b6"/><rect x="10" y="22.1" width="16.2" height="6.1" fill="#0d95b6"/></svg>
<span style="left:314.3px;top:1317px;line-height:48px;font-size:27px;color:#f3a571;letter-spacing:0.937px;">[[Prototype]] </span>
<span style="left:480.5px;top:1317px;line-height:48px;font-size:27px;color:#dfe1e5;letter-spacing:-0.091px;">= </span>
<span style="left:503.6px;top:1317px;line-height:48px;font-size:27px;color:#dfe1e5;letter-spacing:0.236px;">Array(0)</span>
<svg style="left:202px;top:1377px;" width="16" height="22" viewBox="0 0 16 22" fill="none"><path d="M3.8 3.8 L11.2 11 L3.8 18.2" stroke="#b0b3bd" stroke-width="2.1" stroke-linecap="round" stroke-linejoin="round"/></svg>
<svg style="left:238px;top:1373.5px;" width="27" height="31" viewBox="0 0 27 31" fill="none"><text x="0" y="9.6" font-size="11.5" font-family="Liberation Sans, sans-serif" fill="#bcc3cb" stroke="#bcc3cb" stroke-width=".3">1</text><text x="0" y="19.3" font-size="11.5" font-family="Liberation Sans, sans-serif" fill="#bcc3cb" stroke="#bcc3cb" stroke-width=".3">2</text><text x="0" y="29" font-size="11.5" font-family="Liberation Sans, sans-serif" fill="#bcc3cb" stroke="#bcc3cb" stroke-width=".3">3</text><rect x="10" y="2.2" width="16.2" height="6.1" fill="#0d95b6"/><rect x="10" y="12.1" width="16.2" height="6.1" fill="#0d95b6"/><rect x="10" y="22.1" width="16.2" height="6.1" fill="#0d95b6"/></svg>
<span style="left:274.8px;top:1365px;line-height:48px;font-size:27px;color:#f3a571;letter-spacing:0.725px;">interceptors </span>
<span style="left:432.8px;top:1365px;line-height:48px;font-size:27px;color:#dfe1e5;letter-spacing:0.059px;">= </span>
<span style="left:456.2px;top:1365px;line-height:48px;font-size:27px;color:#868686;letter-spacing:0.532px;">Array(0) </span>
<span style="left:566px;top:1365px;line-height:48px;font-size:27px;color:#dfe1e5;letter-spacing:-0.008px;">[]</span>
<svg style="left:202px;top:1425px;" width="16" height="22" viewBox="0 0 16 22" fill="none"><path d="M3.8 3.8 L11.2 11 L3.8 18.2" stroke="#b0b3bd" stroke-width="2.1" stroke-linecap="round" stroke-linejoin="round"/></svg>
<div class="lam" style="left:238px;top:1422px"><span>λ</span></div>
<span style="left:274.3px;top:1413px;line-height:48px;font-size:27px;color:#f3a571;letter-spacing:-0.022px;">_call </span>
<span style="left:337.2px;top:1413px;line-height:48px;font-size:27px;color:#dfe1e5;letter-spacing:-0.091px;">= </span>
<span style="left:360.3px;top:1413px;line-height:48px;font-size:27px;color:#868686;letter-spacing:0.294px;">function(...args) {</span>
<svg style="left:202px;top:1473px;" width="16" height="22" viewBox="0 0 16 22" fill="none"><path d="M3.8 3.8 L11.2 11 L3.8 18.2" stroke="#b0b3bd" stroke-width="2.1" stroke-linecap="round" stroke-linejoin="round"/></svg>
<div class="lam" style="left:238px;top:1470px"><span>λ</span></div>
<span style="left:274.9px;top:1461px;line-height:48px;font-size:27px;color:#f3a571;letter-spacing:0.377px;">call </span>
<span style="left:324.8px;top:1461px;line-height:48px;font-size:27px;color:#dfe1e5;letter-spacing:0.059px;">= </span>
<span style="left:348.2px;top:1461px;line-height:48px;font-size:27px;color:#868686;letter-spacing:0.301px;">function anonymous(module, createData, resolveData</span>
<svg style="left:202px;top:1521px;" width="16" height="22" viewBox="0 0 16 22" fill="none"><path d="M3.8 3.8 L11.2 11 L3.8 18.2" stroke="#b0b3bd" stroke-width="2.1" stroke-linecap="round" stroke-linejoin="round"/></svg>
<div class="lam" style="left:238px;top:1518px"><span>λ</span></div>
<span style="left:274.9px;top:1509px;line-height:48px;font-size:27px;color:#f3a571;letter-spacing:0.076px;">_callAsync </span>
<span style="left:412.3px;top:1509px;line-height:48px;font-size:27px;color:#dfe1e5;letter-spacing:-0.291px;">= </span>
<span style="left:435px;top:1509px;line-height:48px;font-size:27px;color:#868686;letter-spacing:0.326px;">function(...args) {</span>
<svg style="left:202px;top:1569px;" width="16" height="22" viewBox="0 0 16 22" fill="none"><path d="M3.8 3.8 L11.2 11 L3.8 18.2" stroke="#b0b3bd" stroke-width="2.1" stroke-linecap="round" stroke-linejoin="round"/></svg>
<div class="lam" style="left:238px;top:1566px"><span>λ</span></div>
<span style="left:274.9px;top:1557px;line-height:48px;font-size:27px;color:#f3a571;letter-spacing:0.425px;">callAsync </span>
<span style="left:400.7px;top:1557px;line-height:48px;font-size:27px;color:#dfe1e5;letter-spacing:-0.291px;">= </span>
<span style="left:423.4px;top:1557px;line-height:48px;font-size:27px;color:#868686;letter-spacing:0.31px;">function(...args) {</span>
<svg style="left:202px;top:1617px;" width="16" height="22" viewBox="0 0 16 22" fill="none"><path d="M3.8 3.8 L11.2 11 L3.8 18.2" stroke="#b0b3bd" stroke-width="2.1" stroke-linecap="round" stroke-linejoin="round"/></svg>
<div class="lam" style="left:238px;top:1614px"><span>λ</span></div>
<span style="left:274.9px;top:1605px;line-height:48px;font-size:27px;color:#f3a571;letter-spacing:0.061px;">_promise </span>
<span style="left:394px;top:1605px;line-height:48px;font-size:27px;color:#dfe1e5;letter-spacing:-0.291px;">= </span>
<span style="left:416.7px;top:1605px;line-height:48px;font-size:27px;color:#868686;letter-spacing:0.305px;">function(...args) {</span>
<svg style="left:202px;top:1665px;" width="16" height="22" viewBox="0 0 16 22" fill="none"><path d="M3.8 3.8 L11.2 11 L3.8 18.2" stroke="#b0b3bd" stroke-width="2.1" stroke-linecap="round" stroke-linejoin="round"/></svg>
<div class="lam" style="left:238px;top:1662px"><span>λ</span></div>
<span style="left:274.9px;top:1653px;line-height:48px;font-size:27px;color:#f3a571;letter-spacing:0.509px;">promise </span>
<span style="left:382.5px;top:1653px;line-height:48px;font-size:27px;color:#dfe1e5;letter-spacing:-0.291px;">= </span>
<span style="left:405.2px;top:1653px;line-height:48px;font-size:27px;color:#868686;letter-spacing:0.289px;">function(...args) {</span>
<svg style="left:1170px;top:1186px;" width="240" height="110" viewBox="0 0 240 110" fill="none"><path d="M16 48.4 L94.5 15.2 L89.5 93.5 Z" fill="#f64b46" stroke="#f64b46" stroke-width="11" stroke-linejoin="round"/><path d="M96 32.5 L226.7 58.2 L225.8 73.4 L92 77.3 Z" fill="#f64b46"/></svg>
</div></body></html>
